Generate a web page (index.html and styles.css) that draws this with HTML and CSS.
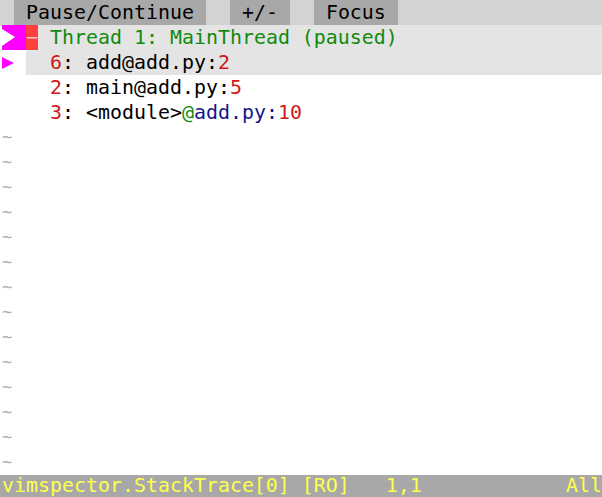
FILE: index.html
```html
<!DOCTYPE html>
<html>
<head>
<meta charset="utf-8">
<link rel="stylesheet" href="styles.css">
</head>
<body>
<div class="screen">
    <div class="linha winbar"><span class="pad"></span> <span class="botao"> Pause/Continue </span>  <span class="botao"> +/- </span>  <span class="botao"> Focus </span></div>

    <div class="linha flexo"><span class="pad"></span><span class="sinalThread"><svg width="24" height="25" viewBox="0 0 24 25"><polygon points="0,4 13,12 0,21" fill="#ffffff"/></svg></span><span class="fold">&minus;</span><span class="cursor"> <span class="verde">Thread 1: MainThread (paused)</span></span></div>

    <div class="linha flexo"><span class="pad"></span><span class="sinalFrame"><svg width="12" height="25" viewBox="0 0 12 25"><polygon points="0,7 12,13 0,19" fill="#ff00ff"/></svg></span><span class="vazio"></span><span class="cursor">  <span class="verm">6</span>: add@add.py:<span class="verm">2</span></span></div>

    <div class="linha"><span class="pad"></span>    <span class="verm">2</span>: main@add.py:<span class="verm">5</span></div>

    <div class="linha"><span class="pad"></span>    <span class="verm">3</span>: &lt;module&gt;<span class="verde">@</span><span class="azul">add.py:</span><span class="verm">10</span></div>

    <div class="linha til"><span class="pad"></span>~</div>
    <div class="linha til"><span class="pad"></span>~</div>
    <div class="linha til"><span class="pad"></span>~</div>
    <div class="linha til"><span class="pad"></span>~</div>
    <div class="linha til"><span class="pad"></span>~</div>
    <div class="linha til"><span class="pad"></span>~</div>
    <div class="linha til"><span class="pad"></span>~</div>
    <div class="linha til"><span class="pad"></span>~</div>
    <div class="linha til"><span class="pad"></span>~</div>
    <div class="linha til"><span class="pad"></span>~</div>
    <div class="linha til"><span class="pad"></span>~</div>
    <div class="linha til"><span class="pad"></span>~</div>
    <div class="linha til"><span class="pad"></span>~</div>
    <div class="linha til"><span class="pad"></span>~</div>

    <div class="linha status"><span class="pad"></span>vimspector.StackTrace[0] [RO]   1,1<span class="statusDir">All</span></div>
</div>
</body>
</html>
```

FILE: styles.css
```css
html, body{
    margin: 0;
    padding: 0;
    background-color: #ffffff;
}

.screen{
    width: 602px;
    height: 497px;
    overflow: hidden;
    font-family: "DejaVu Sans Mono", monospace;
    font-size: 19.93px;
    color: #000000;
}

.linha{
    height: 25px;
    line-height: 25px;
    white-space: pre;
    overflow: hidden;
}

.flexo{
    display: flex;
}

.pad{
    display: inline-block;
    width: 2px;
    flex: none;
}

.winbar{
    background-color: #d3d3d3;
}

.botao{
    background-color: #a8a8a8;
    display: inline-block;
}

.sinalThread{
    width: 24px;
    background-color: #ff00ff;
    flex: none;
}

.sinalThread svg, .sinalFrame svg{
    display: block;
}

.fold{
    width: 12px;
    flex: none;
    background-color: #ff4040;
    color: #ffc0c0;
    text-align: center;
}

.sinalFrame, .vazio{
    width: 12px;
    flex: none;
}

.cursor{
    flex: 1;
    background-color: #e4e4e4;
}

.verde{
    color: #108a10;
}

.verm{
    color: #d01818;
}

.azul{
    color: #15158a;
}

.til{
    color: #b0b0b0;
    font-size: 17px;
}

.status{
    background-color: #a8a8a8;
    color: #ffff50;
    height: 22px;
    line-height: 22px;
}

.statusDir{
    float: right;
}
```
